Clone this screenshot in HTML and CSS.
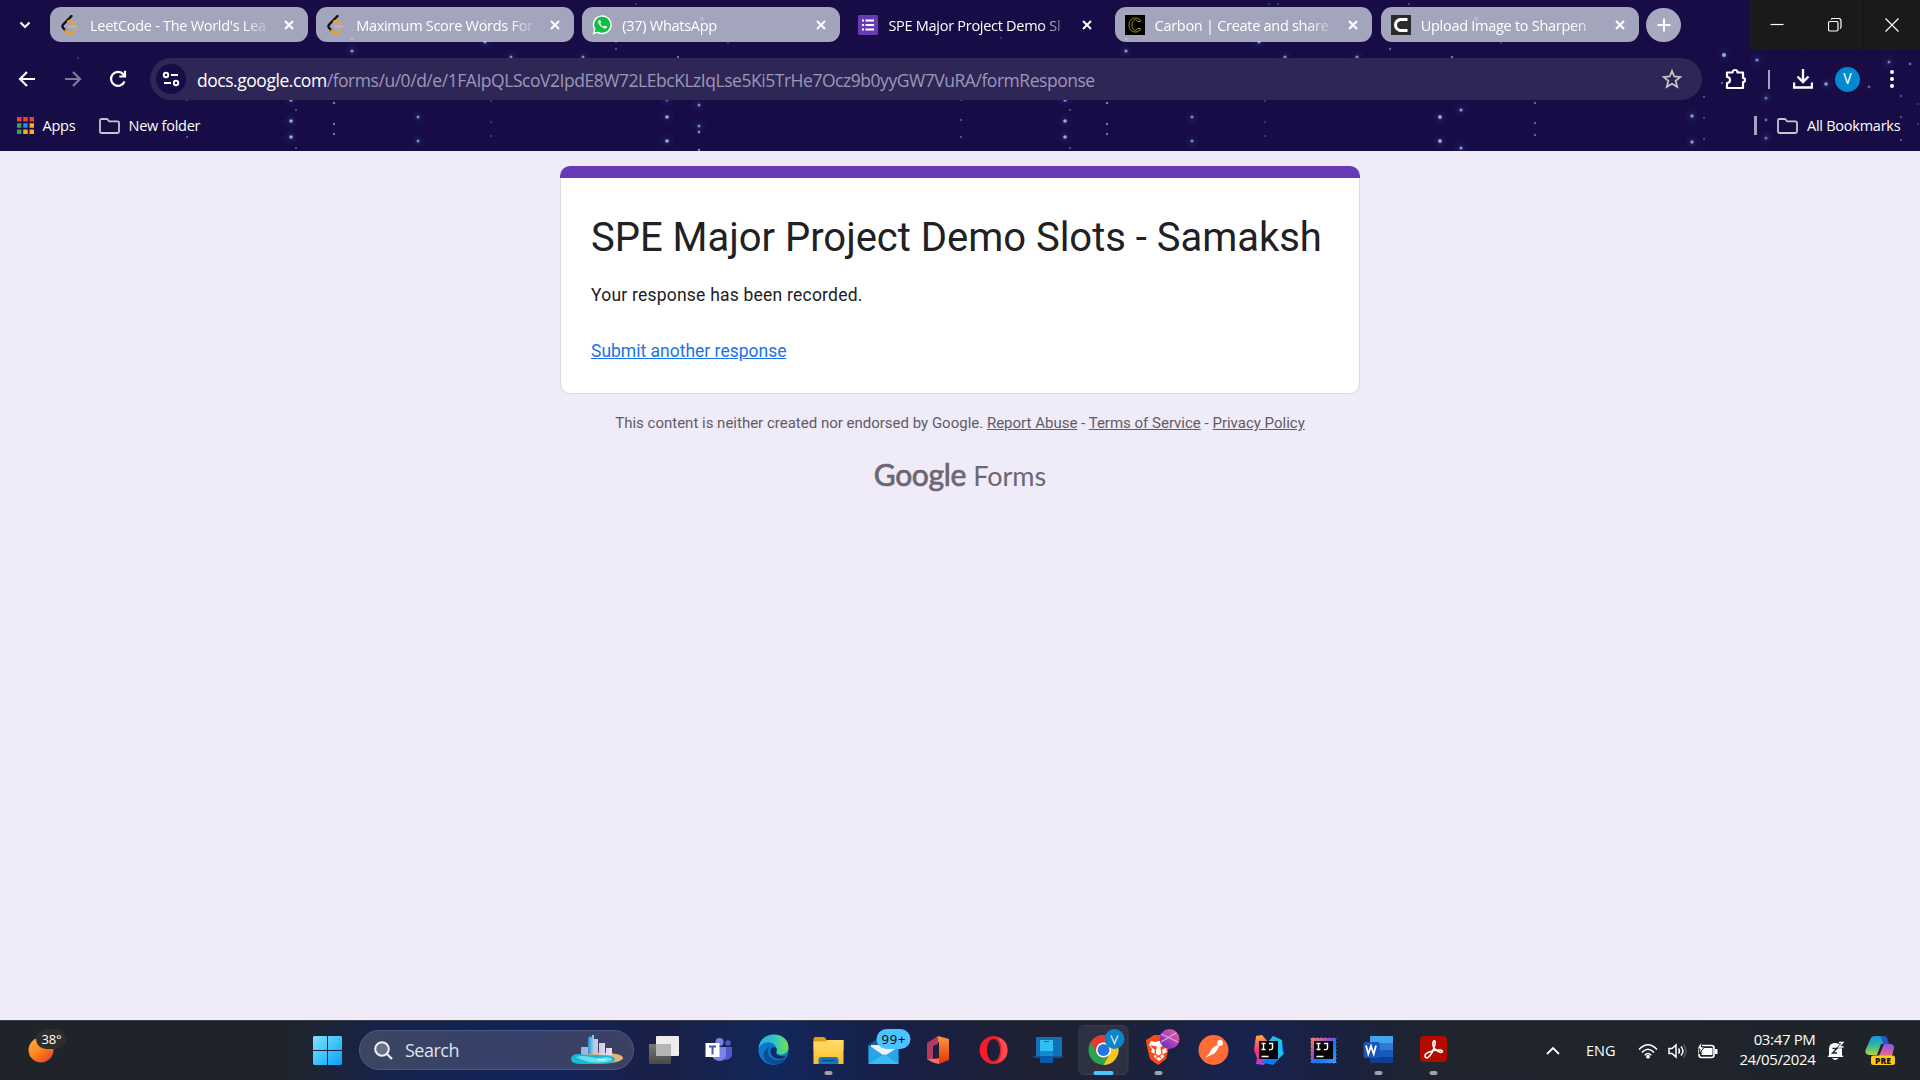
FILE: index.html
```html
<!DOCTYPE html>
<html lang="en">
<head>
<meta charset="utf-8">
<title>SPE Major Project Demo Slots - Samaksh</title>
<link rel="stylesheet" href="styles.css">
</head>
<body>
<div class="screen">
<header class="browser">
  <svg class="stars" id="stars" width="1920" height="151" viewBox="0 0 1920 151"></svg>
  <div class="tabstrip">
    <div class="tabsearch"><svg width="12" height="8" viewBox="0 0 12 8"><path d="M1.500 1.500 6 6l4.500-4.500" fill="none" stroke="#fff" stroke-width="2.200"/></svg></div>
    <div class="tabs">
      <div class="tab"><svg class="fav" viewBox="0 0 20 20"><path d="M11.500 1 3.200 9.500q-1.500 1.800 0 3.500L6 16" fill="none" stroke="#111" stroke-width="2.400" stroke-linecap="round"/><path d="M8 6.500q2.500-1.500 4.500.5l1.500 1.500M5.500 15.500l2 2q2.500 2 5 0l2-2" fill="none" stroke="#f89f1b" stroke-width="2.200" stroke-linecap="round"/><path d="M8.500 11.500H17" stroke="#c5b6a2" stroke-width="2"/></svg><span class="label">LeetCode - The World's Lea</span><svg class="x" viewBox="0 0 10 10"><path d="m1 1 8 8M9 1 1 9"/></svg></div>
      <div class="tab"><svg class="fav" viewBox="0 0 20 20"><path d="M11.500 1 3.200 9.500q-1.500 1.800 0 3.500L6 16" fill="none" stroke="#111" stroke-width="2.400" stroke-linecap="round"/><path d="M8 6.500q2.500-1.500 4.500.5l1.500 1.500M5.500 15.500l2 2q2.500 2 5 0l2-2" fill="none" stroke="#f89f1b" stroke-width="2.200" stroke-linecap="round"/><path d="M8.500 11.500H17" stroke="#c5b6a2" stroke-width="2"/></svg><span class="label">Maximum Score Words For</span><svg class="x" viewBox="0 0 10 10"><path d="m1 1 8 8M9 1 1 9"/></svg></div>
      <div class="tab"><svg class="fav" viewBox="0 0 20 20"><path d="M.5 19.500 2 14.500A9.500 9.500 0 1 1 5.500 18z" fill="#fff"/><path d="M2.500 17.500 3.500 14A8 8 0 1 1 6 16.500z" fill="#0bc143"/><path d="M7.300 5c-2 1-1.300 3.500 1.200 6s5.500 3.500 6.500 1.500v-1l-2.300-1-1.200 1.200C9.500 11 8.600 9.500 8.300 8.500l.9-1.200L8.300 5z" fill="#fff"/></svg><span class="label">(37) WhatsApp</span><svg class="x" viewBox="0 0 10 10"><path d="m1 1 8 8M9 1 1 9"/></svg></div>
      <div class="tab active"><svg class="fav" viewBox="0 0 20 20"><rect width="20" height="20" rx="1" fill="#673ab7"/><path d="M4 5.500h2M4 10h2M4 14.500h2M7.500 5.500h8.500M7.500 10h8.500M7.500 14.500h8.500" stroke="#fff" stroke-width="2.200"/></svg><span class="label">SPE Major Project Demo Sl</span><svg class="x" viewBox="0 0 10 10"><path d="m1 1 8 8M9 1 1 9"/></svg></div>
      <div class="tab"><svg class="fav" viewBox="0 0 20 20"><rect width="20" height="20" fill="#000"/><path d="M15.500 6.500C15 1.500 4 1 4 10s11 8.500 11.500 3.500h-3c-.7 3-5.500 2.500-5.500-3.500s4.800-6.500 5.500-3.500z" fill="none" stroke="#a08f18" stroke-width="1"/></svg><span class="label">Carbon | Create and share</span><svg class="x" viewBox="0 0 10 10"><path d="m1 1 8 8M9 1 1 9"/></svg></div>
      <div class="tab"><svg class="fav" viewBox="0 0 20 20"><rect width="20" height="20" fill="#2b2b2b"/><path d="M16.500 4.500H9Q4.500 6 4.500 10T9 15.500h7.500" fill="none" stroke="#fff" stroke-width="3"/></svg><span class="label">Upload Image to Sharpen</span><svg class="x" viewBox="0 0 10 10"><path d="m1 1 8 8M9 1 1 9"/></svg></div>
    </div>
    <div class="newtab"><svg width="14" height="14" viewBox="0 0 14 14"><path d="M7 .5v13M.5 7h13" stroke="#fff" stroke-width="2"/></svg></div>
    <div class="controls">
      <div class="ctl"><svg width="14" height="14" viewBox="0 0 14 14"><path d="M.5 6.500h13"/></svg></div>
      <div class="ctl"><svg width="14" height="14" viewBox="0 0 14 14"><rect x=".5" y="3.500" width="9.500" height="9.500" rx="1.500"/><path d="M3 1.500Q3.500.5 5 .5h5.500q2.500 0 2.500 2.500v5.500q0 1.500-1 2"/></svg></div>
      <div class="ctl"><svg width="14" height="14" viewBox="0 0 14 14"><path d="m.5.5 13 13m0-13-13 13"/></svg></div>
    </div>
  </div>
  <div class="toolbar">
    <div class="nav">
      <svg width="18" height="18" viewBox="0 0 18 18"><path d="M17 9H2M9 2 2 9l7 7"/></svg>
      <svg class="dim" width="18" height="18" viewBox="0 0 18 18"><path d="M1 9h15M9 2l7 7-7 7"/></svg>
      <svg width="18" height="18" viewBox="0 0 18 18"><path d="M15.500 11.500A7 7 0 1 1 14.500 4.500L16 6M16 .8V6.500h-5.700"/></svg>
    </div>
    <div class="omnibox">
      <div class="tune"><svg width="18" height="16" viewBox="0 0 18 16"><g fill="none" stroke="#fff" stroke-width="2"><circle cx="4" cy="4" r="2.200"/><path d="M9 4h7M2 12h7"/><circle cx="14" cy="12" r="2.200"/></g></svg></div>
      <div class="url"><b>docs.google.com</b>/forms/u/0/d/e/1FAIpQLScoV2IpdE8W72LEbcKLzIqLse5Ki5TrHe7Ocz9b0yyGW7VuRA/formResponse</div>
      <svg class="star" width="20" height="20" viewBox="0 0 20 20"><path d="m10 2 2.300 5.500 6 .5-4.600 3.900 1.500 5.900L10 14.700 4.800 17.800l1.500-5.900L1.700 8l6-.5z" fill="none" stroke="#c8c4c4" stroke-width="1.800"/></svg>
    </div>
    <div class="actions">
      <svg width="22" height="22" viewBox="0 0 22 22"><path d="M2 4.500h5.500a2.500 2.500 0 0 1 5 0H18v5.500a2 2 0 0 1 0 4V20H2v-5a3 3 0 0 0 0-6z" fill="none" stroke="#fff" stroke-width="2.200" stroke-linejoin="round"/></svg>
      <i class="bar"></i>
      <svg class="dl" width="20" height="20" viewBox="0 0 20 20"><path d="M10 0v13M4.500 7.500 10 13l5.500-5.500M1 13.500V18.500h18v-5" fill="none" stroke="#fff" stroke-width="2.400"/></svg>
      <span class="avatar">V</span>
      <svg width="6" height="20" viewBox="0 0 6 20" fill="#fff"><circle cx="3" cy="3" r="2"/><circle cx="3" cy="10" r="2"/><circle cx="3" cy="17" r="2"/></svg>
    </div>
  </div>
  <div class="bookmarks">
    <svg width="17" height="17" viewBox="0 0 17 17"><g fill="#ea4335"><path d="M0 0h4.500v4.500H0z"/><path d="M6.200 0h4.500v4.500H6.200z"/><path d="M12.500 0H17v4.500h-4.500z"/></g><path fill="#34a853" d="M0 6.200h4.500v4.500H0zM0 12.500h4.500V17H0z"/><path fill="#1a8cff" d="M6.200 6.200h4.500v4.500H6.200z"/><path fill="#fbae16" d="M12.500 6.200H17v4.500h-4.500zM6.200 12.500h4.500V17H6.200zM12.500 12.500H17V17h-4.500z"/></svg>
    <span class="bk b1">Apps</span>
    <svg class="folder" width="21" height="16" viewBox="0 0 21 16"><path d="M2.500 1h5.500l2.200 2.300H18.500q1.500 0 1.500 1.500v8.700Q20 15 18.500 15h-16Q1 15 1 13.500v-11Q1 1 2.500 1z"/></svg>
    <span class="bk b2">New folder</span>
    <i class="bar push"></i>
    <svg class="folder f2" width="21" height="16" viewBox="0 0 21 16"><path d="M2.500 1h5.500l2.200 2.300H18.500q1.500 0 1.500 1.500v8.700Q20 15 18.500 15h-16Q1 15 1 13.500v-11Q1 1 2.500 1z"/></svg>
    <span class="bk b3">All Bookmarks</span>
  </div>
</header>
<main class="page">
  <div class="stripe"></div>
  <section class="card">
    <h1>SPE Major Project Demo Slots - Samaksh</h1>
    <p>Your response has been recorded.</p>
    <a href="#">Submit another response</a>
  </section>
  <div class="legal">This content is neither created nor endorsed by Google. <a href="#">Report Abuse</a> - <a href="#">Terms of Service</a> - <a href="#">Privacy Policy</a></div>
  <div class="brand"><span class="g">Google</span><span class="f">Forms</span></div>
</main>
<footer class="taskbar">
  <svg class="weather" width="60" height="60" viewBox="0 0 60 60"><defs><linearGradient id="sun" x1="0" y1="0" x2=".8" y2="1"><stop offset="0" stop-color="#ffb042"/><stop offset=".5" stop-color="#ff8a1c"/><stop offset="1" stop-color="#e8412a"/></linearGradient></defs><circle cx="21" cy="30" r="12.500" fill="url(#sun)"/><rect x="16" y="9" width="30" height="20" rx="10" fill="#2d2d2c"/><text x="21.500" y="24" fill="#fff" font-size="13" textLength="20">38°</text></svg>
  <svg class="win" width="29" height="29" viewBox="0 0 29 29"><defs><linearGradient id="wn" x1="0" y1="0" x2="1" y2="1"><stop offset="0" stop-color="#85e0ff"/><stop offset=".5" stop-color="#3fc4fb"/><stop offset="1" stop-color="#0a9cf8"/></linearGradient></defs><path fill="url(#wn)" d="M1 0h13v14H0V1zM15 0h13l1 1v13H15zM0 15h14v14H1l-1-1zM15 15h14v13l-1 1H15z"/></svg>
  <div class="search">
    <svg width="19" height="19" viewBox="0 0 19 19"><circle cx="8" cy="8" r="6.800" fill="#68718b" stroke="#eef1f6" stroke-width="2"/><path d="m13 13 5 5" stroke="#eef1f6" stroke-width="2.200"/></svg>
    <span>Search</span>
    <svg class="city" width="52" height="30" viewBox="0 0 52 30"><defs><linearGradient id="bl"><stop offset="0" stop-color="#2a8fd0"/><stop offset="1" stop-color="#9fd6f5"/></linearGradient><linearGradient id="bw"><stop offset="0" stop-color="#a4a9e0"/><stop offset="1" stop-color="#efe2ee"/></linearGradient></defs><ellipse cx="30" cy="23" rx="22" ry="5.500" fill="#e9b271"/><path d="M10 12h7v9h-7zM22 4h5v15h-5zM28 8h6v13h-6zM35 13h6v7h-6z" fill="url(#bw)"/><path d="m17 3 2.500-2L21 3v16h-4zM21 0h2v19h-2z" fill="url(#bl)"/><path d="M0 24q0-5 8-5 9 1 18 1 17 0 18 4t-14 5H10Q0 29 0 24z" fill="#18b8d8"/><path d="M5 22q8-2 14 0t17 0q7 1 4 4-10 3-22 1Q8 24 5 22z" fill="#69e1ea"/><path d="M28 24h8l-3 1.500H26" fill="#dffbff"/></svg>
  </div>
  <div class="apps">
    <svg viewBox="0 0 55 60"><defs><linearGradient id="tv" x1="0" y1="0" x2="0" y2="1"><stop offset="0" stop-color="#777"/><stop offset="1" stop-color="#484848"/></linearGradient></defs><rect x="13" y="24" width="22" height="20" rx="1" fill="url(#tv)"/><rect x="20" y="16" width="23" height="20" rx="1" fill="#ededed"/><path d="M20 24h15v12H20z" fill="#b6b6b6"/></svg>
    <svg viewBox="0 0 55 60"><circle cx="28.500" cy="22" r="4" fill="#7b83eb"/><circle cx="37" cy="23" r="2.800" fill="#5059c9"/><path d="M33 27h8v8q-1 5-8 5z" fill="#5059c9"/><path d="M21 27h14v8q-1 6-7 6-6-1-7-5z" fill="#7b83eb"/><rect x="14.500" y="23" width="14" height="14" fill="#fff"/><path d="M18 26.500h7M21.500 26.500v8" stroke="#4b53bc" stroke-width="2"/></svg>
    <svg viewBox="0 0 55 60"><defs><linearGradient id="ed"><stop offset="0" stop-color="#2aa8e8"/><stop offset=".5" stop-color="#2fc5c7"/><stop offset="1" stop-color="#72e04a"/></linearGradient></defs><circle cx="27.500" cy="30" r="15" fill="#0b78ce"/><path d="M12.500 29C13 10 42 10 42.500 27c0 6-5 8-9 7.500-4-.5-2-2-2.500-5C29 20 16 20 12.500 29z" fill="url(#ed)"/><path d="M23 27c-4 11 7 17 17 10-5 10-18 9-21.500 2-2.500-5 0-10 4.500-12z" fill="#0d4d92"/><path d="M31 29c-4-4-8 0-6 5 3 6 11 6 15 2-5 1-13-1-9-7z" fill="#14285a"/></svg>
    <svg viewBox="0 0 55 60"><defs><linearGradient id="fo" x1="0" y1="0" x2="0" y2="1"><stop offset="0" stop-color="#ffdc6b"/><stop offset="1" stop-color="#fcc029"/></linearGradient></defs><path d="M12.500 19q0-2 2-2h8q2 0 3 3h17v10h-30z" fill="#e2a012"/><path d="M12.500 21.500h12l2-1.500h16v24h-30z" fill="url(#fo)"/><path d="M17.500 44v-4q0-3 3-3h14q3 0 3 3v4z" fill="#1477c6"/><path d="M21 40.500h13" stroke="#0c4c8d" stroke-width="1.500"/><rect class="dot" x="23.500" y="51" width="8" height="4" rx="2"/></svg>
    <svg viewBox="0 0 55 60"><path d="M12.500 25 27 15l15.500 10v19h-30z" fill="#175fa5"/><path d="M15 25h25v14H15z" fill="#eee"/><path d="m12.500 25 16 11 14-9v17h-30z" fill="#28a5e9"/><path d="m12.500 44 16-10 14 10z" fill="#39bcf0"/><rect x="20.500" y="9" width="34" height="20" rx="10" fill="#4cc2ff"/><text x="25.500" y="23.700" font-size="13" textLength="24" fill="#000">99+</text></svg>
    <svg viewBox="0 0 55 60"><defs><linearGradient id="of" x1="0" y1="0" x2="0" y2="1"><stop offset="0" stop-color="#ff9640"/><stop offset="1" stop-color="#df3405"/></linearGradient></defs><path d="m27 16 11 3v21l-10 4-9-5 9-1V22l-8 3z" fill="url(#of)"/><path d="M16 39h12v5q-7-1-12-5z" fill="#ff6972"/><path d="m16 23 11-7v8l-5 2v13h-6z" fill="#b33862"/></svg>
    <svg viewBox="0 0 55 60"><defs><linearGradient id="op"><stop offset="0" stop-color="#ff1b2d"/><stop offset="1" stop-color="#d8202f"/></linearGradient></defs><path d="M27.500 16a14 14 0 1 0 .1 0zm0 3c4 0 6.500 5 6.500 11s-2.500 11-6.500 11S21 36 21 30s2.500-11 6.500-11z" fill="url(#op)" fill-rule="evenodd"/><path d="M30 17q11.500 2 11.500 13T30 43c4-2 5.500-7 5.500-13S34 19 30 17z" fill="#ff4b4b"/></svg>
    <svg viewBox="0 0 55 60"><path d="M15 17h26v19H15z" fill="#1170ba"/><path d="M12 36h30l-2 2H14z" fill="#155384"/><path d="M19 20h13v23H19z" fill="#32bff0"/><path d="M19 31h13v12H19z" fill="#1489cf"/><path d="M19 36h13v7H19z" fill="#0a5ca8"/><path d="M23 21.500h5" stroke="#15679a"/></svg>
    <svg viewBox="0 0 55 60"><rect x="3" y="5.500" width="49" height="49" rx="5" fill="#2d3142" stroke="#383c4e"/><circle cx="27.500" cy="30" r="15" fill="#2ba24c"/><path d="M14.500 22.500a15 15 0 0 1 26 0H27.500l-6.500 11z" fill="#e33b2e"/><path d="M40.500 22.500A15 15 0 0 1 27.500 45L34 33.500 27.500 22.500z" fill="#fcc31e"/><circle cx="27.500" cy="30" r="7.500" fill="#fff"/><circle cx="27.500" cy="30" r="6" fill="#2474e4"/><circle cx="38.500" cy="19" r="10" fill="#0b86c9"/><path d="m35 15.500 3.500 8 3.500-8" fill="none" stroke="#bddcf0" stroke-width="1.600"/><rect x="17.500" y="51" width="20" height="4" rx="2" fill="#4cc2ff"/></svg>
    <svg viewBox="0 0 55 60"><path d="m20 17 3-2h9l3 2 4 4-1 6-3 12-8 6-8-6-3-12-1-7z" fill="#fb4a17"/><path d="m20 21 5 1 3-1 3 1 5-1 2 4-3 4 1 3-4 2 1 3-5 4-5-4 1-3-4-2 1-3-3-4z" fill="#fff"/><path d="m20 26 5 1-1 2zM36 26l-5 1 1 2zM25 27l-1 7 3 2-2 2M30 27l1 7-3 2 2 2" stroke="#fb4a17" fill="none" stroke-width="1.400"/><defs><linearGradient id="bv" x1="1" y1="0" x2="0" y2="1"><stop offset="0" stop-color="#e66a84"/><stop offset=".5" stop-color="#b040c0"/><stop offset="1" stop-color="#4d31ad"/></linearGradient></defs><circle cx="38.500" cy="19" r="10" fill="url(#bv)"/><path d="m30 14 17 8M30 22l15-9" stroke="#e0a6dc" stroke-width="1.200"/><rect class="dot" x="23.500" y="51" width="8" height="4" rx="2"/></svg>
    <svg viewBox="0 0 55 60"><circle cx="27.500" cy="30" r="15" fill="#ff6c37"/><circle cx="34" cy="23" r="3" fill="#fff"/><path d="M31 25q-6 3-8 9l-4 4 6-3q6-2 8-9z" fill="#fff"/></svg>
    <svg viewBox="0 0 55 60"><defs><linearGradient id="ij" x1="0" y1="0" x2="0" y2="1"><stop offset="0" stop-color="#ffb13b"/><stop offset=".5" stop-color="#fe3278"/><stop offset="1" stop-color="#c13cce"/></linearGradient></defs><path d="m15 16 6-1 7 8v14l-5 8-8-1 1-6-3-8z" fill="url(#ij)"/><path d="m26 24 6-8 9 5 2 13-11 11-13-3 12-5z" fill="#087cfa"/><path d="m32 16 9 4v8l1 6-5 5V22l-9-1z" fill="#22bde8"/><rect x="18" y="21" width="19" height="18" fill="#08050a"/><path d="M20.500 23.500h4m-2 0v6m-2 0h4M28 23.500h3.500V28q0 2-3.500 1.500M20.500 36.500h7" fill="none" stroke="#fff" stroke-width="1.400"/></svg>
    <svg viewBox="0 0 55 60"><defs><linearGradient id="i2" x1="0" y1="0" x2="1" y2="1"><stop offset="0" stop-color="#ff8055"/><stop offset=".4" stop-color="#964bd7"/><stop offset=".6" stop-color="#087cfa"/><stop offset="1" stop-color="#5094f1"/></linearGradient></defs><rect x="14.500" y="17.500" width="26" height="26" fill="url(#i2)" stroke="#111" stroke-dasharray="2 2"/><rect x="18" y="21" width="19" height="18" fill="#08050a"/><path d="M20.500 23.500h4m-2 0v6m-2 0h4M28 23.500h3.500V28q0 2-3.500 1.500M20.500 36.500h7" fill="none" stroke="#fff" stroke-width="1.400"/></svg>
    <svg viewBox="0 0 55 60"><path d="M19 16h23v7H19z" fill="#41a5ee"/><path d="M19 23h23v7H19z" fill="#2b7cd3"/><path d="M19 30h23v7H19z" fill="#185abd"/><path d="M19 37h23v6H19z" fill="#103f91"/><rect x="12.500" y="22" width="16" height="16" rx="1.500" fill="#1b55b8"/><path d="m15 25.500 2.300 8.500 2.700-8 2.700 8 2.300-8.500" fill="none" stroke="#fff" stroke-width="1.800"/><rect class="dot" x="23.500" y="51" width="8" height="4" rx="2"/></svg>
    <svg viewBox="0 0 55 60"><rect x="14" y="16" width="27" height="26" rx="4" fill="#b30b00"/><path d="M19 35.500c0-3 10-6 15.500-5.500 4 1 1 3-1 2-5-2-7-6-6.500-9.500.5-3 3-2 2 1.500-1 5-4 11-7 13.500q-3 1-3-2z" fill="none" stroke="#fff" stroke-width="1.600"/><rect class="dot" x="23.500" y="51" width="8" height="4" rx="2"/></svg>
  </div>
  <div class="tray">
    <svg width="14" height="9" viewBox="0 0 14 9"><path d="m1 8 6-6 6 6" fill="none" stroke="#fff" stroke-width="1.800"/></svg>
    <span class="eng">ENG</span>
    <svg class="wifi" width="20" height="16" viewBox="0 0 20 16"><g fill="none" stroke="#fff" stroke-width="1.600"><path d="M1 6.500q9-9.500 18 0M4 9.500q6-6.500 12 0"/><path d="M6.700 12.200q3.300-3.500 6.600 0"/></g><circle cx="10" cy="13.700" r="1.900" fill="#fff"/></svg>
    <svg class="snd" width="20" height="16" viewBox="0 0 20 16"><g fill="none" stroke="#fff" stroke-width="1.500"><path d="M1 5.500h3L8 2v12l-4-3.500H1zM10.500 5.500q2 2.500 0 5M13 3.500q4 4.500 0 9"/><path d="M15.500 1.500q5 6.500 0 13" stroke="#555a60"/></g></svg>
    <svg class="bat" width="21" height="17" viewBox="0 0 21 17"><rect x="2" y="3.500" width="15" height="12" rx="2.500" fill="none" stroke="#fff" stroke-width="1.600"/><path d="M5 6h10.500v7H4.500z" fill="#fff"/><path d="M18 7h2.500v5H18z" fill="#fff"/><path d="M4 0 0 7h3l-1 5 5.500-7H4.500z" fill="#fff" stroke="#20242b"/></svg>
    <div class="clock"><span>03:47 PM</span><span class="date">24/05/2024</span></div>
    <svg class="bell" width="18" height="20" viewBox="0 0 18 20"><path d="M2 14V8q0-6 6-6 7 0 7 6v6l1.500 2H.5zM5 17h6.500q-3.200 4-6.500 0z" fill="#fff"/><path d="M5.500 7.500h4.500l-4.500 4.500h4.500" fill="none" stroke="#20242b" stroke-width="1.400"/><path d="M12 1.500h4L12 6h4" fill="none" stroke="#20242b" stroke-width="2.600"/><path d="M12 1.500h4L12 6h4.500" fill="none" stroke="#fff" stroke-width="1.300"/></svg>
    <svg class="pilot" width="30" height="30" viewBox="0 0 30 30"><defs><linearGradient id="c1" x1="0" y1="0" x2="0" y2="1"><stop offset="0" stop-color="#1595df"/><stop offset=".5" stop-color="#32b7a0"/><stop offset="1" stop-color="#b8d13c"/></linearGradient><linearGradient id="c2" x1="0" y1="0" x2="0" y2="1"><stop offset="0" stop-color="#8757e8"/><stop offset="1" stop-color="#f06b86"/></linearGradient></defs><path d="M5 4q1-4 5-4h8q3 0 4 5l1 3h-7l-4 11H4q-5-1-3-6z" fill="url(#c1)"/><path d="M15 0h4q3 0 4 5l1 3h-6q-1-6-3-8z" fill="#2358c8"/><path d="M19 8h6q4 0 4 4l-2 8H14z" fill="url(#c2)"/><rect x="6" y="19.500" width="24" height="9.500" rx="2.500" fill="#ffca16"/><text x="10" y="27.500" font-size="8.500" font-weight="800" textLength="16" fill="#111">PRE</text></svg>
  </div>
</footer>
</div>
<script src="stars.js"></script>
</body>
</html>
```
FILE: stars.js
```js
// Each entry: x, y, radius, opacity of one star in the browser theme.
const stars = [
  [352,30,1,.6],[352,39,1.2,.8],[352,51,1.5,.8],[485,21,1.5,.6],[485,42,1.5,.8],[511,57,1.5,.7],[583,57,1.5,.7],[616,42,1,.4],[616,49,1,.5],
  [78,58,1,.3],[187,100,1,.4],[187,137,1.1,.5],[291,100,1.7,.8],[291,121,1.8,.9],[291,137,1.8,.9],[296,110,1,.5],[296,148,1,.5],
  [334,103,1.3,.6],[334,124,1.2,.6],[334,134,1.2,.6],[418,117,1.5,.7],[418,141,1.5,.7],[491,101,1,.3],[491,122,1,.3],[491,136,1,.3],
  [702,19,2,.8],[728,43,1,.3],[678,57,1.2,.6],[667,117,1.8,.9],[667,141,1.8,.9],[667,100,1.5,.5],[699,105,1.5,.7],[699,126,1.5,.7],[699,132,1.4,.7],[699,150,1.3,.7],
  [636,4,1,.3],[961,100,1,.4],[961,120,1.1,.5],[961,137,1.1,.5],[1001,38,1,.3],[1065,100,1.7,.8],[1065,121,1.8,.9],[1065,137,1.8,.9],[1070,110,1,.5],[1070,148,1,.5],
  [1107,103,1.3,.6],[1107,124,1.2,.6],[1107,134,1.2,.6],[1126,39,1.2,.8],[1126,51,1.6,.8],[1192,117,1.5,.7],[1192,141,1.5,.7],[1259,22,1.5,.6],[1259,42,1.5,.8],
  [1265,101,1,.3],[1265,122,1,.3],[1265,136,1,.3],[1269,4,1,.3],[1278,4,1,.3],[1285,57,1.6,.7],[1357,57,1.6,.7],[1390,49,1.2,.5],[1390,29,1,.5],[1409,4,1,.4],[1452,57,1.3,.6],
  [1440,117,1.9,.9],[1440,141,1.9,.9],[1461,110,1.6,.8],[1461,148,1.6,.8],[1476,19,2,.8],[1501,43,1,.3],[1535,103,1.2,.5],[1535,123,1.2,.5],[1535,135,1.2,.5],
  [1724,55,2,.9],[1757,60,1.6,.7],[1692,116,1.7,.8],[1692,142,1.7,.8],[1704,97,1.1,.5],[1704,118,1.1,.4],[1704,139,1.1,.4],[1766,98,1.5,.6],[1766,120,1.4,.6],[1766,138,1.5,.6],
  [1826,84,1.8,.8],[1889,62,1.5,.6],[1910,64,1.4,.5],[1869,87,1.4,.5],[1901,96,1.2,.4],[1901,117,1.2,.4],[1901,140,1.2,.4],[1722,83,1.2,.5],[1918,104,1,.3],[1918,124,1,.3]
];
document.getElementById('stars').innerHTML = stars.map(([x, y, r, o]) =>
  (r > 1.4 ? `<circle cx="${x}" cy="${y}" r="7" fill="#2b5cb8" opacity=".07"/><circle cx="${x}" cy="${y}" r="3.5" fill="#3a6bd0" opacity=".1"/>` : '') +
  `<circle cx="${x}" cy="${y}" r="${r}" fill="#b4b8dc" opacity="${o}"/>`).join('');
```
FILE: styles.css
```css
* { box-sizing: border-box; }
body { margin: 0; background: #f0ebf8; overflow: hidden; }
svg { display: block; flex: none; }
.screen { width: 1920px; height: 1080px; display: flex; flex-direction: column; font-family: "Open Sans", "Noto Sans", sans-serif; }

.browser { position: relative; height: 151px; background: #170c45; color: #fff; flex: none; overflow: hidden; }
.stars { position: absolute; inset: 0; }
.tabstrip { position: relative; height: 50px; display: flex; }
.tabsearch { width: 50px; padding: 21px 0 0 19px; }
.tabs { display: flex; gap: 8.300px; padding-top: 7px; width: 1588.500px; }
.tab { flex: 1 1 0; min-width: 0; height: 35px; border-radius: 11px; background: rgba(188, 193, 209, .85); display: flex; align-items: center; padding: 0 14px 0 10px; }
.tab.active { background: none; }
.fav { width: 20px; height: 20px; margin: 1px 10px 0 0; }
.label { flex: 1; min-width: 0; margin: 2px 12px 0 0; overflow: hidden; white-space: nowrap; font-size: 14.500px; line-height: 24px; letter-spacing: -.28px; -webkit-mask-image: linear-gradient(90deg, #000 84%, transparent 101%); mask-image: linear-gradient(90deg, #000 84%, transparent 101%); }
.x { width: 10px; height: 10px; fill: none; stroke: #fff; stroke-width: 2; }
.newtab { width: 35px; height: 34px; margin: 8px 0 0 7.500px; border-radius: 17px; background: #a7a9c0; display: flex; align-items: center; justify-content: center; }
.controls { margin-left: auto; display: flex; gap: 1px; }
.ctl { width: 56.300px; height: 50px; background: #1a1a1a; display: flex; align-items: center; justify-content: center; }
.ctl svg { fill: none; stroke: #fff; stroke-width: 1.200; }

.toolbar { position: relative; height: 58px; display: flex; align-items: center; }
.nav { width: 150px; display: flex; gap: 27.500px; padding-left: 18px; }
.nav svg { fill: none; stroke: #fff; stroke-width: 2.200; }
.nav .dim { opacity: .45; }
.omnibox { width: 1552px; height: 42px; border-radius: 21px; background: #2e2657; display: flex; align-items: center; padding: 0 20px 0 6px; }
.tune { width: 30px; height: 30px; border-radius: 15px; background: #170c45; display: flex; align-items: center; justify-content: center; }
.url { margin: 1px 0 0 11px; flex: 1; white-space: nowrap; font-size: 17.500px; letter-spacing: -.46px; color: #9d97b6; }
.url b { font-weight: 400; color: #fff; }
.actions { flex: 1; display: flex; align-items: center; padding-left: 23px; }
.bar { display: block; width: 2px; height: 19px; background: #a3a3c2; }
.actions .bar { margin: 0 23px 0 21px; }
.avatar { width: 25px; height: 25px; border-radius: 50%; background: #0288d1; font: 14px/25px Roboto, sans-serif; text-align: center; margin: 0 29px 0 22px; }

.bookmarks { position: relative; height: 35px; display: flex; align-items: center; padding: 0 18px 0 17px; }
.bk { font-size: 14.500px; line-height: 22px; letter-spacing: -.25px; white-space: nowrap; }
.b1 { margin-left: 8.500px; width: 56px; }
.b2 { margin-left: 9px; }
.push { margin-left: auto; margin-right: 20px; width: 3px; }
.folder { fill: none; stroke: #c8c6cb; stroke-width: 1.800; }
.b3 { margin-left: 9px; width: 95px; }

.page { flex: 1; font-family: Roboto, sans-serif; display: flex; flex-direction: column; align-items: center; padding-top: 15px; }
.stripe { width: 800px; height: 12px; background: #673ab7; border-radius: 10px 10px 0 0; }
.card { width: 800px; height: 216px; background: #fff; border: 1px solid #dadce0; border-top: 0; border-radius: 0 0 10px 10px; padding: 33px 30px; color: #202124; }
.card h1 { margin: 0; font-size: 40px; line-height: 54px; font-weight: 400; white-space: nowrap; letter-spacing: -.02px; }
.card p { margin: 18px 0 31px; font-size: 17.500px; line-height: 25px; letter-spacing: .22px; }
.card a { display: block; font-size: 17.500px; line-height: 25px; color: #1a73e8; }
.legal { margin-top: 18px; font-size: 15px; line-height: 22px; color: #5f5b66; }
.legal a { color: inherit; }
.brand { margin-top: 20px; display: flex; gap: 7px; align-items: baseline; color: #6b6771; line-height: 40px; }
.g { font: 400 30px/40px Lato, sans-serif; -webkit-text-stroke: .7px #6b6771; letter-spacing: -.3px; }
.f { font: 400 27px/40px Lato, sans-serif; }

.taskbar { height: 60px; flex: none; display: flex; align-items: flex-start; border-top: 1px solid #3d4249; background: linear-gradient(90deg, #1f242b 0, #1f242b 290px, #15234d 390px, #12235a 560px, #1a2046 660px, #12275a 775px, #171f46 900px, #1e2133 1030px, #1d2235 1110px, #172250 1240px, #1a2140 1330px, #1f242e 1430px, #1f242b 100%); color: #fff; }
.taskbar > svg, .apps svg { margin-top: -1px; }
.weather { margin-left: 20px; }
.taskbar .win { margin: 15px 17px 0 233px; }
.search { width: 275px; height: 40px; margin-top: 9px; border-radius: 20px; background: linear-gradient(90deg, #3b4661, #36406a 50%, #3b4163); border: 1px solid #4c587f; display: flex; align-items: center; padding: 0 10px 0 14px; }
.search span { font-size: 18px; letter-spacing: -.5px; color: #dfe3ec; margin-left: 12px; flex: 1; }
.apps { display: flex; margin-left: 2px; }
.apps svg { width: 55px; height: 60px; }
.dot { fill: #9fa2ad; }
.tray { flex: 1; height: 59px; display: flex; align-items: center; padding-left: 85px; }
.eng { margin-left: 26px; width: 52px; font-size: 14.500px; letter-spacing: 0; }
.snd { margin-left: 10px; }
.bat { margin-left: 9px; }
.clock { width: 97.500px; margin-top: -3px; text-align: right; font-size: 15px; line-height: 20px; display: flex; flex-direction: column; letter-spacing: -.35px; white-space: nowrap; }
.bell { margin-left: 11px; }
.pilot { margin-left: 20px; }
```
